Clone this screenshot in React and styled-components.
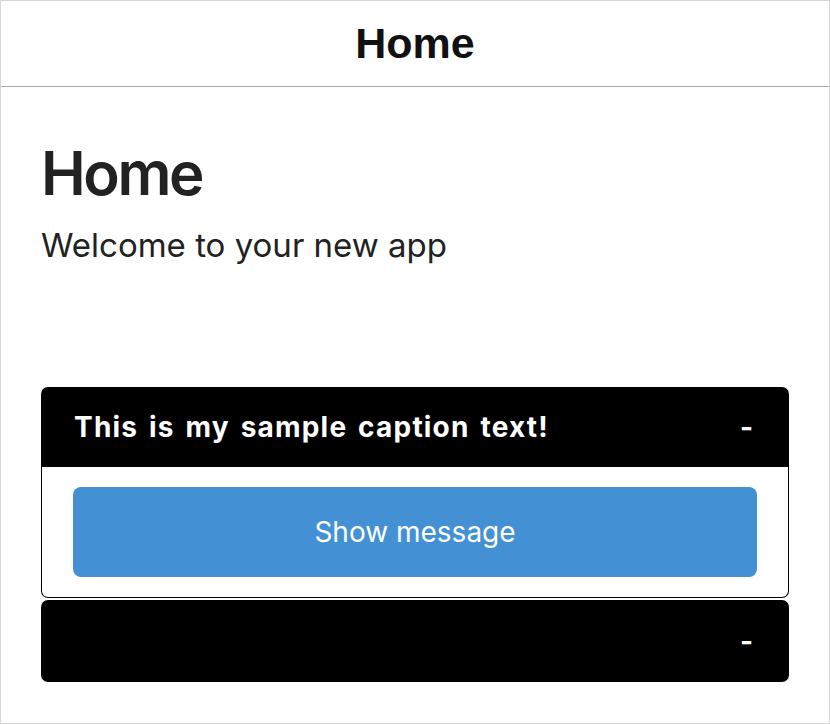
import styled, { createGlobalStyle } from "styled-components";

const GlobalStyle = createGlobalStyle`
	html, body {
		margin: 0;
		padding: 0;
		background: #ffffff;
	}
	* {
		box-sizing: border-box;
	}
`;

function CollapsibleCard({ caption, open, children }) {
	return (
		<Card>
			<CardHeader $open={open}>
				<Caption>{caption}</Caption>
				<Toggle>-</Toggle>
			</CardHeader>
			{open && <CardBody>{children}</CardBody>}
		</Card>
	);
}

export default function App() {
	return (
		<>
			<GlobalStyle />
			<Frame>
				<TopBar>
					<TopBarTitle>Home</TopBarTitle>
				</TopBar>
				<Content>
					<PageTitle>Home</PageTitle>
					<Lead>Welcome to your new app</Lead>
					<CardList>
						<CollapsibleCard caption="This is my sample caption text!" open>
							<ActionButton type="button">Show message</ActionButton>
						</CollapsibleCard>
						<CollapsibleCard caption="" />
					</CardList>
				</Content>
			</Frame>
		</>
	);
}

const Frame = styled.div`
	width: 830px;
	height: 724px;
	border: 1px solid #d6d6d6;
	display: flex;
	flex-direction: column;
	font-family: Inter, "Noto Sans", sans-serif;
	color: #222222;
	overflow: hidden;
`;

const TopBar = styled.header`
	height: 86px;
	flex-shrink: 0;
	border-bottom: 1px solid #a8a8a8;
	display: flex;
	align-items: center;
	justify-content: center;
`;

const TopBarTitle = styled.h1`
	margin: 0;
	font-family: "Liberation Sans", Arial, sans-serif;
	font-size: 43px;
	font-weight: bold;
	color: #111111;
`;

const Content = styled.main`
	padding: 0 40px;
	display: flex;
	flex-direction: column;
`;

const PageTitle = styled.h2`
	margin: 50px 0 0;
	font-size: 60px;
	font-weight: 600;
	letter-spacing: -0.04em;
	line-height: 72px;
	color: #222222;
`;

const Lead = styled.p`
	margin: 16px 0 0;
	font-size: 33px;
	line-height: 40px;
	color: #222222;
`;

const CardList = styled.div`
	margin-top: 122px;
	display: flex;
	flex-direction: column;
	gap: 2px;
`;

const Card = styled.section`
	display: flex;
	flex-direction: column;
`;

const CardHeader = styled.div`
	height: ${(p) => (p.$open ? "80px" : "82px")};
	background: #000000;
	color: #ffffff;
	border-radius: ${(p) => (p.$open ? "7px 7px 0 0" : "7px")};
	display: flex;
	align-items: center;
	justify-content: space-between;
	padding: 0 36px 0 33px;
`;

const Caption = styled.span`
	font-size: 28px;
	font-weight: 700;
	letter-spacing: 1.2px;
	word-spacing: 3px;
`;

const Toggle = styled.span`
	font-size: 28px;
	font-weight: 700;
`;

const CardBody = styled.div`
	border: 1px solid #000000;
	border-top: none;
	border-radius: 0 0 7px 7px;
	padding: 20px 31px 20px 31px;
`;

const ActionButton = styled.button`
	width: 100%;
	height: 90px;
	border: none;
	border-radius: 8px;
	background: #4391d4;
	color: #ffffff;
	font-family: Inter, "Noto Sans", sans-serif;
	font-size: 28px;
	font-weight: 400;
	cursor: pointer;
`;
